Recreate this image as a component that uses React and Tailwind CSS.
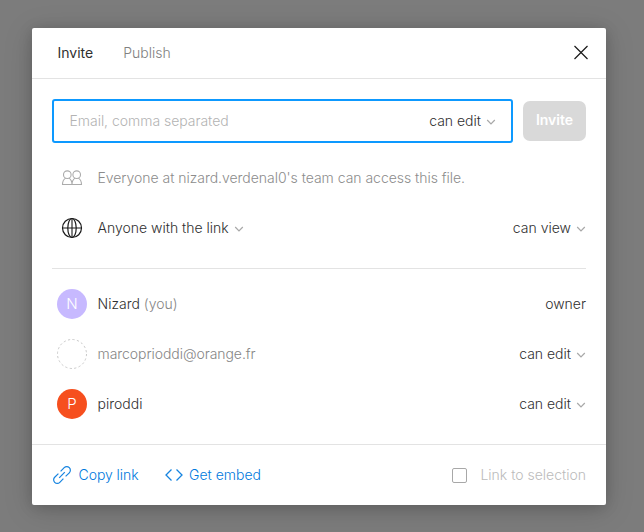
import React from "react";

function Chevron() {
  return (
    <svg width="10" height="6" viewBox="0 0 10 6" fill="none" stroke="#a8a8a8" strokeWidth="1.2" className="mt-[2px] shrink-0">
      <path d="M1.200 1L5 4.800 8.800 1" />
    </svg>
  );
}

function Permission({ children }) {
  return (
    <button className="flex items-center gap-[5px] text-[#303030]">
      <span>{children}</span>
      <Chevron />
    </button>
  );
}

function CloseIcon() {
  return (
    <svg width="16" height="16" viewBox="0 0 16 16" fill="none" stroke="#1a1a1a" strokeWidth="1.2">
      <path d="M1.500 1l13 13M14.500 1l-13 13" />
    </svg>
  );
}

function PeopleIcon() {
  return (
    <svg width="22" height="16" viewBox="0 0 22 16" fill="none" stroke="#ababab" strokeWidth="1.1">
      <circle cx="6.300" cy="4.700" r="3.800" />
      <circle cx="15.700" cy="4.700" r="3.800" />
      <path d="M4.600 8.100C2.500 9.400 1.500 11.500 1.500 14.500H20.500C20.500 11.500 19.500 9.400 17.400 8.100M8 8.100C10 9.400 11 11.500 11 14.500C11 11.500 12 9.400 14 8.100" />
    </svg>
  );
}

function GlobeIcon() {
  return (
    <svg width="22" height="22" viewBox="0 0 22 22" fill="none" stroke="#1a1a1a" strokeWidth="1.2">
      <circle cx="11" cy="11" r="9.500" />
      <path d="M1.500 11H20.500M11 1.500V20.500" strokeWidth="1.1" />
      <ellipse cx="11" cy="11" rx="4.200" ry="9.500" />
    </svg>
  );
}

function LinkIcon() {
  return (
    <svg width="20" height="20" viewBox="0 0 20 20" fill="none" stroke="#1684e0" strokeWidth="1.2">
      <path d="M7.200 12.800L12.800 7.200" />
      <path d="M8.600 6.400L12.200 2.700A3.600 3.600 0 0 1 17.300 2.700A3.600 3.600 0 0 1 17.300 7.800L13.600 11.400" />
      <path d="M11.400 13.600L7.800 17.300A3.600 3.600 0 0 1 2.700 17.300A3.600 3.600 0 0 1 2.700 12.200L6.400 8.600" />
    </svg>
  );
}

function CodeIcon() {
  return (
    <svg width="18" height="12" viewBox="0 0 18 12" fill="none" stroke="#1684e0" strokeWidth="1.3">
      <path d="M6.500 .5L1 6l5.500 5.500M11.500 .5L17 6l-5.500 5.500" />
    </svg>
  );
}

function EmptyAvatar() {
  return (
    <svg width="30" height="30" viewBox="0 0 30 30" fill="none">
      <circle cx="15" cy="15" r="14.500" stroke="#c8c8c8" strokeDasharray="2.200 2.355" />
    </svg>
  );
}

function Avatar({ letter, color }) {
  return (
    <div className={`flex size-[30px] items-center justify-center rounded-full text-[15px] text-white ${color}`}>{letter}</div>
  );
}

function Row({ icon, label, action }) {
  return (
    <div className="flex h-[50px] items-center">
      <div className="ml-[5px] mr-[10.500px] flex w-[30px] shrink-0 justify-center">{icon}</div>
      <div className="flex-1">{label}</div>
      {action}
    </div>
  );
}

export default function App() {
  return (
    <div className="h-[532px] w-[644px] overflow-hidden bg-[#7c7c7c] pl-[32px] pt-[28px] font-['Inter',sans-serif] text-[14px] font-light leading-[20px] text-[#303030]">
      <div className="flex h-[477px] w-[574px] flex-col rounded-[2px] bg-white shadow-[0_5px_30px_rgba(0,0,0,0.15),0_2px_14px_rgba(0,0,0,0.15)]">
        <header className="flex h-[51px] shrink-0 items-center border-b border-[#e3e3e3] pl-[25.500px] pr-[17.500px]">
          <span className="font-normal">Invite</span>
          <span className="ml-[30px] text-[#808080]">Publish</span>
          <button className="ml-auto"><CloseIcon /></button>
        </header>
        <main className="flex-1 px-[20px] pt-[20px]">
          <div className="flex items-center gap-[10px]">
            <div className="flex h-[44px] w-[461px] items-center justify-between rounded-[3px] border-2 border-[#0d99ff] pl-[15.500px] pr-[15px]">
              <span className="tracking-[-0.03px] text-[#b3b3b3]">Email, comma separated</span>
              <Permission>can edit</Permission>
            </div>
            <button className="h-[40px] w-[63px] rounded-[7px] bg-[#d9d9d9] pb-[2px] font-semibold text-white">Invite</button>
          </div>
          <div className="mt-[10px]">
            <Row icon={<PeopleIcon />} label={<span className="tracking-[-0.03px] text-[#8c8c8c]">Everyone at nizard.verdenal0's team can access this file.</span>} />
            <Row
              icon={<GlobeIcon />}
              label={<Permission>Anyone with the link</Permission>}
              action={<Permission>can view</Permission>}
            />
          </div>
          <div className="mt-[15px] border-t border-[#e3e3e3] pt-[10px]">
            <Row
              icon={<Avatar letter="N" color="bg-[#c7b9ff]" />}
              label={<span>Nizard <span className="text-[#868686]">(you)</span></span>}
              action={<span>owner</span>}
            />
            <Row icon={<EmptyAvatar />} label={<span className="tracking-[-0.06px] text-[#868686]">marcoprioddi@orange.fr</span>} action={<Permission>can edit</Permission>} />
            <Row icon={<Avatar letter="P" color="bg-[#f64f1e]" />} label="piroddi" action={<Permission>can edit</Permission>} />
          </div>
        </main>
        <footer className="flex h-[61px] shrink-0 items-center border-t border-[#e3e3e3] px-[20px] text-[#0079dd]">
          <button className="flex items-center gap-[6.500px] tracking-[-0.05px]"><LinkIcon />Copy link</button>
          <button className="ml-[26px] flex items-center gap-[6.500px]"><CodeIcon />Get embed</button>
          <label className="ml-auto flex items-center gap-[13px] text-[#bbbbbb]">
            <span className="size-[15px] rounded-[2px] border border-[#a8a8a8]" />
            Link to selection
          </label>
        </footer>
      </div>
    </div>
  );
}
